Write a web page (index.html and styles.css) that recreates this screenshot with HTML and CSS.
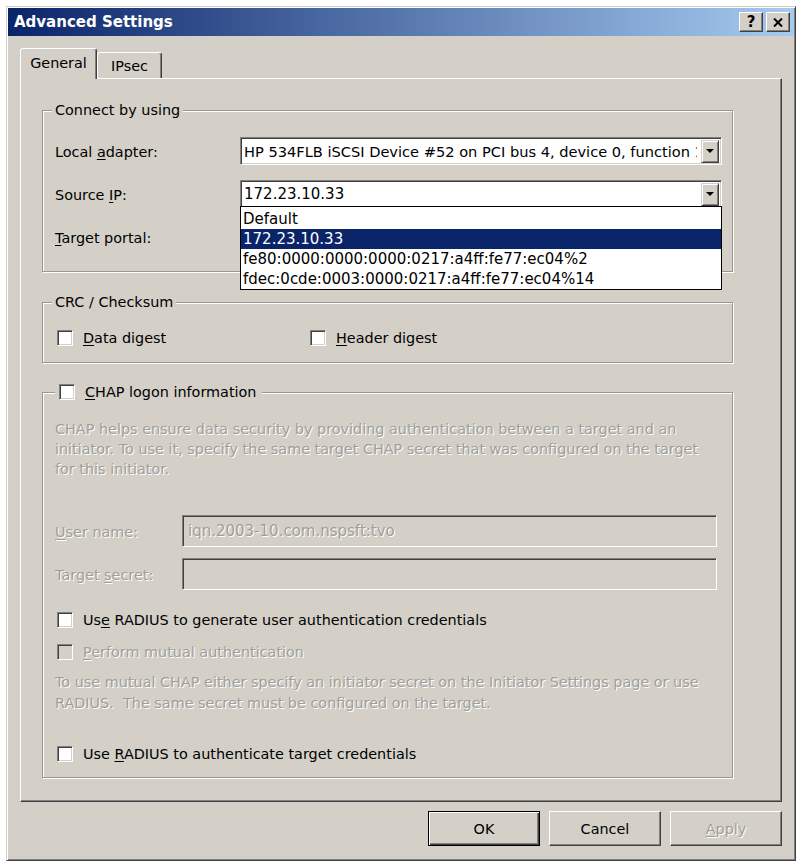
FILE: index.html
```html
<!DOCTYPE html>
<html lang="en">
<head>
  <meta charset="UTF-8" />
  <title>Advanced Settings</title>
  <link rel="stylesheet" href="styles.css">
</head>
<body>

  <div class="window">
    <div class="titlebar">
      <span class="title">Advanced Settings</span>
      <div class="title-buttons">
        <span class="tbtn">?</span>
        <span class="tbtn">
          <svg width="10" height="9" viewBox="0 0 10 9"><path d="M1 0.5 L9 8.5 M9 0.5 L1 8.5" stroke="#000" stroke-width="2"/></svg>
        </span>
      </div>
    </div>

    <div class="tabs">
      <div class="tab active">General</div>
      <div class="tab">IPsec</div>
    </div>

    <div class="panel">

      <!-- Connect by using -->
      <fieldset class="group connect">
        <legend>Connect by using</legend>
        <div class="row">
          <label class="row-label">Local <u>a</u>dapter:</label>
          <div class="combo">
            <span class="combo-value adapter">HP 534FLB iSCSI Device #52 on PCI bus 4, device 0, function 1</span>
            <span class="combo-btn"><span class="arrow"></span></span>
          </div>
        </div>
        <div class="row">
          <label class="row-label">Source <u>I</u>P:</label>
          <div class="combo">
            <span class="combo-value">172.23.10.33</span>
            <span class="combo-btn"><span class="arrow"></span></span>
            <ul class="dropdown">
              <li>Default</li>
              <li class="selected">172.23.10.33</li>
              <li>fe80:0000:0000:0000:0217:a4ff:fe77:ec04%2</li>
              <li>fdec:0cde:0003:0000:0217:a4ff:fe77:ec04%14</li>
            </ul>
          </div>
        </div>
        <div class="row">
          <label class="row-label"><u>T</u>arget portal:</label>
          <div class="combo">
            <span class="combo-value"></span>
            <span class="combo-btn"><span class="arrow"></span></span>
          </div>
        </div>
      </fieldset>

      <!-- CRC / Checksum -->
      <fieldset class="group crc">
        <legend>CRC / Checksum</legend>
        <div class="check-row">
          <label class="check"><span class="box"></span><span><u>D</u>ata digest</span></label>
          <label class="check"><span class="box"></span><span><u>H</u>eader digest</span></label>
        </div>
      </fieldset>

      <!-- CHAP -->
      <fieldset class="group chap">
        <legend><label class="check"><span class="box"></span><span><u>C</u>HAP logon information</span></label></legend>
        <p class="note disabled">CHAP helps ensure data security by providing authentication between a target and an<br>initiator. To use it, specify the same target CHAP secret that was configured on the target<br>for this initiator.</p>

        <div class="field first">
          <label class="field-label disabled"><u>U</u>ser name:</label>
          <div class="textbox disabled">iqn.2003-10.com.nspsft:tvo</div>
        </div>
        <div class="field">
          <label class="field-label disabled">Target <u>s</u>ecret:</label>
          <div class="textbox"></div>
        </div>

        <label class="check radius-gen"><span class="box"></span><span>Us<u>e</u> RADIUS to generate user authentication credentials</span></label>
        <label class="check mutual disabled"><span class="box"></span><span><u>P</u>erform mutual authentication</span></label>
        <p class="note disabled mutual-note">To use mutual CHAP either specify an initiator secret on the Initiator Settings page or use<br>RADIUS.&nbsp; The same secret must be configured on the target.</p>
        <label class="check radius-target"><span class="box"></span><span>Use <u>R</u>ADIUS to authenticate target credentials</span></label>
      </fieldset>

    </div>

    <div class="actions">
      <button class="btn default">OK</button>
      <button class="btn">Cancel</button>
      <button class="btn disabled"><u>A</u>pply</button>
    </div>
  </div>

</body>
</html>
```

FILE: styles.css
```css
* {
  box-sizing: border-box;
}

body {
  margin: 0;
  background-color: #fff;
  font-family: "DejaVu Sans", sans-serif;
  font-size: 14.4px;
  color: #000;
}

u {
  text-underline-offset: 2px;
}

.window {
  width: 790px;
  height: 855px;
  margin: 6px 0 0 6px;
  padding: 1px;
  background-color: #d4d0c8;
  border: 1px solid;
  border-color: #d4d0c8 #404040 #404040 #d4d0c8;
  box-shadow: inset 1px 1px #fff, inset -1px -1px #808080;
  display: flex;
  flex-direction: column;
}

/* title bar */
.titlebar {
  flex: none;
  height: 28px;
  display: flex;
  align-items: center;
  justify-content: space-between;
  padding: 0 4px 0 6px;
  background: linear-gradient(to right, #0a246a, #a6caf0);
  color: #fff;
  font-size: 15px;
  font-weight: bold;
}

.title-buttons {
  display: flex;
  gap: 3px;
}

.tbtn {
  width: 24px;
  height: 20px;
  display: flex;
  align-items: center;
  justify-content: center;
  background-color: #d4d0c8;
  border: 1px solid;
  border-color: #fff #404040 #404040 #fff;
  box-shadow: inset -1px -1px #808080;
  color: #000;
  font-size: 15px;
  font-weight: bold;
}

/* tabs */
.tabs {
  flex: none;
  height: 30px;
  margin: 12px 0 0 12px;
  display: flex;
  align-items: flex-end;
  position: relative;
  z-index: 1;
}

.tab {
  height: 26px;
  width: 65px;
  display: flex;
  align-items: center;
  justify-content: center;
  background-color: #d4d0c8;
  border: 1px solid;
  border-bottom: none;
  border-color: #fff #404040 transparent #fff;
  box-shadow: inset -1px 0 #808080;
  border-radius: 3px 3px 0 0;
}

.tab.active {
  width: 77px;
  height: 31px;
  margin-bottom: -1px;
  padding-bottom: 2px;
}

.panel {
  flex: none;
  height: 724px;
  margin: 0 12px;
  padding: 0 0 0 21px;
  border: 1px solid;
  border-color: #fff #404040 #404040 #fff;
  box-shadow: inset -1px -1px #808080;
}

/* group boxes */
.group {
  width: 691px;
  min-width: 0;
  margin: 0;
  border: 1px solid #9a9792;
  box-shadow: 1px 1px 0 #fff, inset 1px 1px 0 #fff;
}

.group legend {
  line-height: 18px;
  padding: 0 3px;
  margin-left: -3px;
  background-color: #d4d0c8;
}

.connect {
  margin-top: 22px;
  padding: 18px 10px 20px 12px;
}

.crc {
  margin-top: 21px;
  padding: 18px 10px 15px 12px;
}

.chap {
  margin-top: 20px;
  padding: 18px 10px 14px 12px;
}

.chap legend {
  padding: 0 6px 0 2px;
  margin-left: 0;
}

.row {
  display: flex;
  align-items: center;
  height: 28px;
}

.row + .row {
  margin-top: 15px;
}

.row-label {
  width: 185px;
  padding-top: 2px;
}

.combo {
  position: relative;
  width: 482px;
  height: 28px;
  display: flex;
  align-items: center;
  background-color: #fff;
  border: 1px solid;
  border-color: #808080 #fff #fff #808080;
  box-shadow: inset 1px 1px #404040, inset -1px -1px #d4d0c8;
  padding: 0 2px 0 3px;
}

.combo-value {
  flex: 1;
  overflow: hidden;
  white-space: nowrap;
  font-size: 15px;
}

.combo-value.adapter {
  font-size: 14.6px;
  margin-right: 4px;
}

.combo-btn {
  flex: none;
  width: 18px;
  height: 23px;
  display: flex;
  align-items: center;
  justify-content: center;
  background-color: #d4d0c8;
  border: 1px solid;
  border-color: #d4d0c8 #404040 #404040 #d4d0c8;
  box-shadow: inset 1px 1px #fff, inset -1px -1px #808080;
}

.arrow {
  width: 0;
  height: 0;
  border-left: 4px solid transparent;
  border-right: 4px solid transparent;
  border-top: 4px solid #000;
}

.dropdown {
  position: absolute;
  top: calc(100% - 1px);
  left: -1px;
  width: calc(100% + 2px);
  margin: 0;
  padding: 2px 0 0;
  list-style: none;
  background-color: #fff;
  border: 1px solid #000;
  z-index: 2;
}

.dropdown li {
  height: 20px;
  line-height: 20px;
  padding-left: 2px;
  font-size: 15px;
  white-space: nowrap;
}

.dropdown li.selected {
  background-color: #0a246a;
  color: #fff;
}

/* checkboxes */
.check {
  display: flex;
  align-items: center;
  gap: 10px;
  height: 18px;
  padding-left: 2px;
}

.box {
  flex: none;
  width: 16px;
  height: 16px;
  background-color: #fff;
  border: 1px solid;
  border-color: #808080 #fff #fff #808080;
  box-shadow: inset 1px 1px #404040, inset -1px -1px #d4d0c8;
}

.check-row {
  display: grid;
  grid-template-columns: 253px auto;
}

.disabled {
  color: #a19e98;
  text-shadow: 1px 1px 0 #fff;
}

.check.disabled .box {
  background-color: #d4d0c8;
}

.note {
  margin: 0;
  line-height: 20px;
  white-space: nowrap;
}

.field {
  display: flex;
  align-items: center;
  margin-top: 11px;
}

.field.first {
  margin-top: 36px;
}

.field-label {
  width: 127px;
  padding-top: 2px;
}

.textbox {
  width: 535px;
  height: 32px;
  display: flex;
  align-items: center;
  padding-left: 5px;
  background-color: #d4d0c8;
  border: 1px solid;
  border-color: #808080 #fff #fff #808080;
  box-shadow: inset 1px 1px #404040, inset -1px -1px #d4d0c8;
  font-size: 15px;
}

.radius-gen {
  margin-top: 21px;
}

.mutual {
  margin-top: 14px;
}

.mutual-note {
  margin-top: 11px;
  line-height: 21px;
}

.radius-target {
  margin-top: 31px;
}

/* bottom buttons */
.actions {
  flex: none;
  display: flex;
  justify-content: flex-end;
  gap: 9px;
  margin-top: 9px;
  padding-right: 12px;
}

.btn {
  width: 112px;
  height: 35px;
  padding: 0;
  font-family: "DejaVu Sans", sans-serif;
  font-size: 14.4px;
  color: #000;
  background-color: #d4d0c8;
  border: 1px solid;
  border-color: #fff #404040 #404040 #fff;
  box-shadow: inset -1px -1px #808080;
}

.btn.default {
  border-color: #000;
  box-shadow: inset 1px 1px #fff, inset -1px -1px #404040, inset -2px -2px #808080;
}

.btn.disabled {
  color: #a19e98;
  text-shadow: 1px 1px 0 #fff;
}
```
